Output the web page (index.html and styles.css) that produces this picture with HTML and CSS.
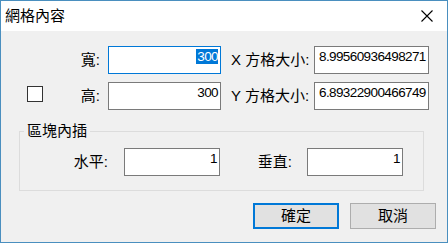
FILE: index.html
```html
<!DOCTYPE html>
<html lang="zh-Hant">
	<head>
		<title>網格內容</title>
		<link rel="stylesheet" href="styles.css">
	</head>
	<body>
		<div class="win">
			<div class="titlebar">
				<span class="title">網格內容</span>
				<svg class="close" width="12" height="12" viewBox="0 0 12 12">
					<path d="M0.5 0.5 L11.5 11.5 M11.5 0.5 L0.5 11.5" stroke="#000" stroke-width="1.1" fill="none"/>
				</svg>
			</div>
			<div class="body">
				<div class="row">
					<span class="chk-slot"></span>
					<label class="lab">寬:</label>
					<div class="field num focus"><span class="sel">300</span></div>
					<label class="lab2">X 方格大小:</label>
					<div class="field txt">8.99560936498271</div>
				</div>
				<div class="row">
					<span class="chk-slot"><span class="chk"></span></span>
					<label class="lab">高:</label>
					<div class="field num">300</div>
					<label class="lab2">Y 方格大小:</label>
					<div class="field txt">6.89322900466749</div>
				</div>

				<fieldset class="group">
					<legend>區塊內插</legend>
					<div class="row">
						<label class="glab">水平:</label>
						<div class="field num small">1</div>
						<label class="glab2">垂直:</label>
						<div class="field num small">1</div>
					</div>
				</fieldset>

				<div class="buttons">
					<button class="btn default">確定</button>
					<button class="btn">取消</button>
				</div>
			</div>
		</div>
	</body>
</html>
```
FILE: styles.css
```css
*{margin:0;padding:0;box-sizing:border-box;}
body{background:#fff;font-family:"Liberation Sans","Noto Sans CJK TC",sans-serif;font-size:15px;color:#000;}
.win{width:448px;height:243px;border:1px solid #4a8fbf;display:flex;flex-direction:column;}
.titlebar{height:30px;background:#fff;display:flex;align-items:center;padding:0 14px 0 4px;}
.title{flex:1;line-height:20px;}
.close{display:block;}
.body{flex:1;background:#f0f0f0;padding:15px 11px 0 0;}
.row{display:flex;align-items:center;height:28px;margin-bottom:8px;}
.chk-slot{width:42px;height:28px;padding:4px 0 0 26px;}
.chk{display:block;width:16px;height:16px;border:1px solid #333;background:#fff;}
.lab{width:57px;text-align:right;line-height:20px;}
.lab2{width:83px;margin-left:10px;line-height:20px;}
.field{height:28px;border:1px solid #7a7a7a;background:#fff;font-size:13.5px;letter-spacing:-0.6px;line-height:15px;padding:2px 2px 0 4px;overflow:hidden;white-space:nowrap;}
.field.num{width:113px;margin-left:8px;text-align:right;}
.field.txt{width:115px;}
.field.focus{border-color:#0078d7;}
.sel{background:#0078d7;color:#fff;display:inline-block;padding-left:1px;}
.group{margin:11px 12px 0 18px;border:1px solid #dcdcdc;padding:7px 0 14px 0;}
.group legend{margin-left:4px;padding:0 3px;line-height:20px;}
.group .row{margin-bottom:0;}
.glab{width:88px;text-align:right;line-height:20px;}
.glab2{width:72px;text-align:right;line-height:20px;}
.field.small{width:96px;margin-left:16px;}
.glab2 + .field.small{margin-left:15px;}
.buttons{display:flex;justify-content:flex-end;gap:11px;margin-top:12px;}
.btn{width:86px;height:26px;background:#e1e1e1;border:1px solid #adadad;font-family:inherit;font-size:15px;line-height:20px;color:#000;}
.btn.default{border:2px solid #0078d7;}
```
